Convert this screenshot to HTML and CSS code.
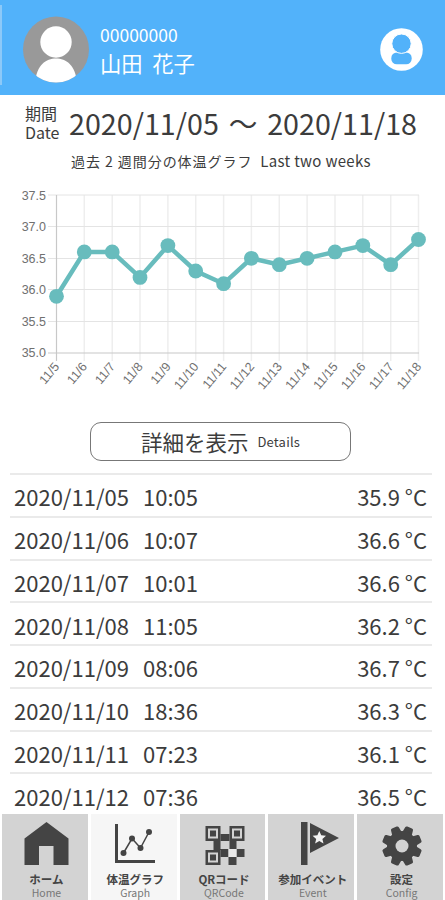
FILE: index.html
```html
<!DOCTYPE html>
<html lang="ja">
<head>
  <meta charset="UTF-8" />
  <meta name="viewport" content="width=device-width, initial-scale=1.0" />
  <title>体温グラフ</title>
  <link rel="stylesheet" href="styles.css">
</head>
<body>
  <header>
    <svg class="avatar" viewBox="0 0 66 68">
      <clipPath id="avatarClip"><circle cx="33" cy="33.500" r="33" /></clipPath>
      <circle cx="33" cy="33.500" r="33" fill="#999" />
      <circle cx="33" cy="26" r="15.700" fill="#fff" />
      <path d="M12 68C13 49 23 42.500 33 42.500S53 49 54 68Z" fill="#fff" clip-path="url(#avatarClip)" />
    </svg>
    <div class="user">
      <div class="user-id">00000000</div>
      <div class="user-name">山田&nbsp; 花子</div>
    </div>
    <svg class="account" viewBox="0 0 43 43">
      <circle cx="21.500" cy="21.500" r="21.300" fill="#fff" />
      <rect x="11.300" y="24.500" width="20.400" height="11.800" rx="5.500" fill="#52b2fa" />
      <circle cx="21.500" cy="15.700" r="9.700" fill="#52b2fa" stroke="#fff" stroke-width="1" />
    </svg>
  </header>

  <main>
    <section class="period">
      <div class="period-label"><span>期間</span><span>Date</span></div>
      <div class="period-range"><span>2020/11/05</span><span>〜</span><span>2020/11/18</span></div>
    </section>
    <p class="caption"><span>過去 2 週間分の体温グラフ</span><span class="caption-en">Last two weeks</span></p>

    <svg class="chart" viewBox="0 180 445 220">
      <path class="grid-x" d="M84.300 195V361M112.200 195V361M140 195V361M167.900 195V361M195.700 195V361M223.600 195V361M251.400 195V361M279.300 195V361M307.100 195V361M335 195V361M362.800 195V361M390.700 195V361M418.500 195V361" />
      <path class="grid-y" d="M48 195H419M48 226.500H419M48 258.500H419M48 289.500H419M48 321.500H419" />
      <path class="axis" d="M56.500 195V361M48 353H419" />
      <g class="y-labels">
        <text x="46" y="199.500">37.5</text>
        <text x="46" y="231">37.0</text>
        <text x="46" y="262.500">36.5</text>
        <text x="46" y="294">36.0</text>
        <text x="46" y="325.500">35.5</text>
        <text x="46" y="357">35.0</text>
      </g>
      <g class="x-labels">
        <text transform="translate(60 367) rotate(-50)">11/5</text>
        <text transform="translate(87.800 367) rotate(-50)">11/6</text>
        <text transform="translate(115.700 367) rotate(-50)">11/7</text>
        <text transform="translate(143.500 367) rotate(-50)">11/8</text>
        <text transform="translate(171.400 367) rotate(-50)">11/9</text>
        <text transform="translate(199.200 367) rotate(-50)">11/10</text>
        <text transform="translate(227.100 367) rotate(-50)">11/11</text>
        <text transform="translate(254.900 367) rotate(-50)">11/12</text>
        <text transform="translate(282.800 367) rotate(-50)">11/13</text>
        <text transform="translate(310.600 367) rotate(-50)">11/14</text>
        <text transform="translate(338.500 367) rotate(-50)">11/15</text>
        <text transform="translate(366.300 367) rotate(-50)">11/16</text>
        <text transform="translate(394.200 367) rotate(-50)">11/17</text>
        <text transform="translate(422 367) rotate(-50)">11/18</text>
      </g>
      <polyline class="line" points="56.500,296.300 84.300,251.900 112.200,251.900 140,277.400 167.900,245.600 195.700,271 223.600,283.700 251.400,258.300 279.300,264.700 307.100,258.300 335,251.900 362.800,245.600 390.700,264.700 418.500,239.500" />
      <g class="dots">
        <circle cx="56.500" cy="296.300" r="7.400" />
        <circle cx="84.300" cy="251.900" r="7.400" />
        <circle cx="112.200" cy="251.900" r="7.400" />
        <circle cx="140" cy="277.400" r="7.400" />
        <circle cx="167.900" cy="245.600" r="7.400" />
        <circle cx="195.700" cy="271" r="7.400" />
        <circle cx="223.600" cy="283.700" r="7.400" />
        <circle cx="251.400" cy="258.300" r="7.400" />
        <circle cx="279.300" cy="264.700" r="7.400" />
        <circle cx="307.100" cy="258.300" r="7.400" />
        <circle cx="335" cy="251.900" r="7.400" />
        <circle cx="362.800" cy="245.600" r="7.400" />
        <circle cx="390.700" cy="264.700" r="7.400" />
        <circle cx="418.500" cy="239.500" r="7.400" />
      </g>
    </svg>

    <button class="details"><span>詳細を表示</span><small>Details</small></button>

    <ul class="records">
      <li><span class="day">2020/11/05</span><span>10:05</span><span class="temp">35.9 °C</span></li>
      <li><span class="day">2020/11/06</span><span>10:07</span><span class="temp">36.6 °C</span></li>
      <li><span class="day">2020/11/07</span><span>10:01</span><span class="temp">36.6 °C</span></li>
      <li><span class="day">2020/11/08</span><span>11:05</span><span class="temp">36.2 °C</span></li>
      <li><span class="day">2020/11/09</span><span>08:06</span><span class="temp">36.7 °C</span></li>
      <li><span class="day">2020/11/10</span><span>18:36</span><span class="temp">36.3 °C</span></li>
      <li><span class="day">2020/11/11</span><span>07:23</span><span class="temp">36.1 °C</span></li>
      <li><span class="day">2020/11/12</span><span>07:36</span><span class="temp">36.5 °C</span></li>
    </ul>
  </main>

  <nav>
    <a href="#">
      <svg viewBox="0 0 48 48"><path d="M24.500 2L46.500 18.500V45H31.500V26H17V45H2.500V18.500Z" /></svg>
      <b>ホーム</b><small>Home</small>
    </a>
    <a href="#" class="active">
      <svg viewBox="0 0 48 48">
        <path d="M4 4H7V40H44V43H4Z" />
        <path d="M12.500 33L21 18.500L29.500 28L38 12" fill="none" stroke="#444" stroke-width="1.500" />
        <circle cx="12.500" cy="33" r="3" /><circle cx="21" cy="18.500" r="3" /><circle cx="29.500" cy="28" r="3" /><circle cx="38" cy="12" r="3" />
      </svg>
      <b>体温グラフ</b><small>Graph</small>
    </a>
    <a href="#">
      <svg viewBox="-0.500 1 48 48">
        <path fill-rule="evenodd" d="M5 7H20V22H5ZM7.500 9.500V19.500H17.500V9.500ZM29 7H44V22H29ZM31.500 9.500V19.500H41.500V9.500ZM5 31H20V46H5ZM7.500 33.500V43.500H17.500V33.500Z" />
        <path d="M9.500 11.500H15.500V17.500H9.500ZM33.500 11.500H39.500V17.500H33.500ZM9.500 35.500H15.500V41.500H9.500ZM20 15H29V22H20ZM13 22H20V31H13ZM20 30H28V38H20ZM29 22H36V30H29ZM36 30H44V38H36ZM28 38H36V46H28Z" />
        <path d="M28 30H36V38H28Z" fill="#e8e8e8" />
      </svg>
      <b>QRコード</b><small>QRCode</small>
    </a>
    <a href="#">
      <svg viewBox="-2 0 48 48">
        <path d="M10 2H16.500V45H10ZM19 3L48 18L19 33Z" />
        <path d="M28.300 11L30.200 15.300L35 15.700L31.400 18.900L32.500 23.500L28.300 21.100L24.100 23.500L25.200 18.900L21.600 15.700L26.400 15.300Z" fill="#f2f2f2" />
      </svg>
      <b>参加イベント</b><small>Event</small>
    </a>
    <a href="#">
      <svg viewBox="0 0 48 48">
        <g transform="translate(24 26)">
          <path id="teeth" d="M-5 -13L-4.200 -18.500Q-4 -20 -2.500 -20H2.500Q4 -20 4.200 -18.500L5 -13V13L4.200 18.500Q4 20 2.500 20H-2.500Q-4 20 -4.200 18.500L-5 13Z" transform="rotate(22.500)" />
          <use href="#teeth" transform="rotate(45)" />
          <use href="#teeth" transform="rotate(90)" />
          <use href="#teeth" transform="rotate(135)" />
          <circle r="15" />
          <circle r="6.500" fill="#d3d3d3" />
        </g>
      </svg>
      <b>設定</b><small>Config</small>
    </a>
  </nav>
</body>
</html>
```
FILE: styles.css
```css
* {
  box-sizing: border-box;
}
body {
  margin: 0;
  height: 900px;
  display: flex;
  flex-direction: column;
  overflow: hidden;
  font-family: 'Noto Sans CJK JP', sans-serif;
  background-color: #fff;
  color: #3c3c3c;
}
header {
  height: 95px;
  flex: none;
  display: flex;
  align-items: flex-start;
  padding: 0 22px 0 0;
  background-color: #52b2fa;
  color: #fff;
}
header::before {
  content: '';
  width: 2px;
  height: 80px;
  margin-top: 5px;
  background-color: #8cc9f8;
}
.avatar {
  width: 66px;
  height: 68px;
  margin: 16px 0 0 21px;
}
.user {
  margin: 22px 0 0 11px;
}
.user-id {
  font-size: 17.5px;
  line-height: 26px;
}
.user-name {
  font-size: 21.3px;
  line-height: 30px;
  white-space: pre;
}
.account {
  width: 43px;
  height: 43px;
  margin: 28px 0 0 auto;
}
main {
  flex: 1;
  min-height: 0;
  overflow: hidden;
  display: flex;
  flex-direction: column;
}
.period {
  display: flex;
  flex: none;
  height: 54px;
  padding: 9px 0 0 25px;
}
.period-label {
  width: 44px;
  display: flex;
  flex-direction: column;
  font-size: 16px;
  line-height: 19px;
}
.period-range {
  width: 348px;
  display: flex;
  justify-content: space-between;
  font-size: 28.7px;
  line-height: 38px;
  white-space: nowrap;
}
.caption {
  display: flex;
  flex: none;
  gap: 8px;
  height: 31px;
  margin: 0;
  padding-left: 71px;
  font-size: 14px;
  letter-spacing: 0.95px;
  line-height: 24px;
  white-space: nowrap;
}
.caption-en {
  font-size: 15px;
  letter-spacing: 0.3px;
}
.chart {
  width: 445px;
  height: 220px;
  flex: none;
  font-family: 'Liberation Sans', Arial, sans-serif;
  font-size: 12.5px;
}
.chart text {
  fill: #707070;
  text-anchor: end;
}
.grid-x {
  stroke: #eee;
  stroke-width: 1.5;
}
.grid-y {
  stroke: #e4e4e4;
}
.axis {
  stroke: #c8c8c8;
  stroke-width: 1.2;
  fill: none;
}
.line {
  fill: none;
  stroke: #68bcbd;
  stroke-width: 4.5;
}
.dots {
  fill: #68bcbd;
}
.details {
  width: 261px;
  height: 39px;
  flex: none;
  margin: 22px 0 0 90px;
  padding: 0;
  display: flex;
  justify-content: center;
  align-items: center;
  gap: 9px;
  border: 1px solid #777;
  border-radius: 11px;
  background: none;
  font-family: inherit;
  font-size: 21.5px;
  color: inherit;
}
.details small {
  font-size: 13px;
  letter-spacing: 0.2px;
}
.records {
  list-style: none;
  margin: 12px 13px 0 10px;
  padding: 0;
}
.records li {
  height: 42.75px;
  display: flex;
  align-items: center;
  padding: 2px 5px 0 4px;
  border-top: 2px solid #eaeaea;
  font-size: 22px;
}
.day {
  width: 129px;
}
.temp {
  margin-left: auto;
}
nav {
  height: 87px;
  flex: none;
  display: grid;
  grid-template-columns: repeat(5, 1fr);
  gap: 3px;
  padding: 1px 2px 0;
}
nav a {
  display: flex;
  flex-direction: column;
  align-items: center;
  padding: 6px 0 0 3px;
  background-color: #d3d3d3;
  color: #444;
  text-decoration: none;
  white-space: nowrap;
}
nav a.active {
  background-color: #f6f6f6;
}
nav svg {
  width: 48px;
  height: 48px;
  flex: none;
  fill: #444;
  overflow: visible;
}
nav b {
  font-size: 11.5px;
  line-height: 16px;
  margin-top: 3px;
}
nav small {
  font-size: 10.5px;
  line-height: 11px;
  color: #777;
}
```
